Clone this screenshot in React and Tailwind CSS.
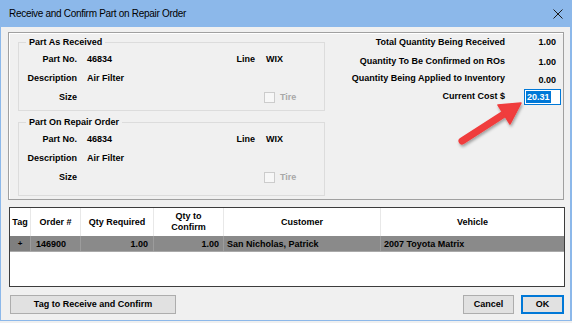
const font = { fontFamily: '"Liberation Sans", Arial, sans-serif' };

const asReceived = { partNo: "46834", line: "WIX", description: "Air Filter" };
const onOrder = { partNo: "46834", line: "WIX", description: "Air Filter" };

const totals = [
  { label: "Total Quantity Being Received", value: "1.00" },
  { label: "Quantity To Be Confirmed on ROs", value: "1.00" },
  { label: "Quantity Being Applied to Inventory", value: "0.00" },
];

const columns = [
  { title: "Tag", w: "w-[21px]" },
  { title: "Order #", w: "w-[50px]" },
  { title: "Qty Required", w: "w-[73px]" },
  { title: "Qty to\nConfirm", w: "w-[70px]" },
  { title: "Customer", w: "w-[157px]" },
  { title: "Vehicle", w: "flex-1" },
];

function PartGroup({ legend, part, height }) {
  return (
    <fieldset className={`border border-[#dcdcdc] w-[307px] ${height}`}>
      <legend className="ml-[7px] px-[3px] h-[12px] leading-[12px] text-[9px] font-bold">{legend}</legend>
      <div className="pt-[2px] text-[9px] font-bold leading-[19px]">
        <div className="flex h-[19px]">
          <span className="w-[58px] text-right">Part No.</span>
          <span className="w-[130px] pl-[10px]">{part.partNo}</span>
          <span className="w-[48px] text-right">Line</span>
          <span className="pl-[11px]">{part.line}</span>
        </div>
        <div className="flex h-[19px]">
          <span className="w-[58px] text-right">Description</span>
          <span className="w-[130px] pl-[10px]">{part.description}</span>
        </div>
        <div className="flex h-[19px] items-center">
          <span className="w-[58px] text-right">Size</span>
          <span className="w-[187px]" />
          <span className="w-[11px] h-[11px] border border-[#cccccc] bg-[#f7f7f7]" />
          <span className="pl-[5px] text-[#a8a8a8]">Tire</span>
        </div>
      </div>
    </fieldset>
  );
}

export default function App() {
  return (
    <div style={font} className="w-[572px] h-[323px] bg-[#f0f0f0] text-black">
      <div className="relative w-[572px] h-[321px] flex flex-col border-l border-r-2 border-b border-[#8cb8ea]">
        <div className="h-[27px] bg-[#8cb8ea] flex items-center justify-between pl-[9px] pr-[7px] -mx-px">
          <span className="text-[10px] tracking-[-0.3px]">Receive and Confirm Part on Repair Order</span>
          <svg width="10" height="10" viewBox="0 0 10 10" className="mr-[1px]">
            <path d="M0.5 0.5 L9.5 9.5 M9.5 0.5 L0.5 9.5" stroke="#1a1a1a" strokeWidth="1" />
          </svg>
        </div>

        <div className="flex-1 flex flex-col pl-[7px] pr-[6px] pt-[5px]">
          <div className="h-[168px] flex border border-[#a0a0a0] shadow-[inset_1px_1px_0_#ffffff]">
            <div className="flex flex-col gap-[5px] pl-[9px] pt-[3px]">
              <PartGroup legend="Part As Received" part={asReceived} height="h-[75px]" />
              <PartGroup legend="Part On Repair Order" part={onOrder} height="h-[80px]" />
            </div>
            <div className="flex-1 flex flex-col pt-[1px] text-[9px] font-bold">
              {totals.map((t, i) => (
                <div key={t.label} className={`flex h-[18px] items-center ${i === 1 ? "mt-[1px]" : ""} ${i === 2 ? "-mt-[1px]" : ""}`}>
                  <span className="flex-1 text-right">{t.label}</span>
                  <span className={`w-[58px] text-right pr-[7px] ${i > 0 ? "pt-[2px]" : ""} ${i === 2 ? "pt-[4px]" : ""}`}>{t.value}</span>
                </div>
              ))}
              <div className="flex h-[18px] items-center">
                <span className="flex-1 text-right">Current Cost $</span>
                <span className="w-[58px] pl-[19px]">
                  <span className="flex items-center w-[37px] h-[16px] border border-[#0078d7] bg-white pl-px">
                    <span className="bg-[#0078d7] text-white leading-[12px] px-px">20.31</span>
                  </span>
                </span>
              </div>
            </div>
          </div>

          <div className="mt-[7px] h-[80px] bg-white border border-[#3c3c3c] ml-px -mr-px flex flex-col text-[9px] font-bold">
            <div className="flex h-[28px]">
              {columns.map((c) => (
                <div key={c.title} className={`${c.w} flex items-center justify-center text-center whitespace-pre-line leading-[11px] border-r border-[#e8e8e8] last:border-r-0`}>
                  {c.title}
                </div>
              ))}
            </div>
            <div className="flex h-[16px] bg-[#8a8a8a] leading-[16px] border-b border-[#a9a9a9]">
              <div className="w-[21px] text-center bg-[#7f7f7f] border-r border-[#9c9c9c] text-[8px]">+</div>
              <div className="w-[50px] pl-[5px] border-r border-[#9c9c9c]">146900</div>
              <div className="w-[73px] text-right pr-[5px] border-r border-[#9c9c9c]">1.00</div>
              <div className="w-[70px] text-right pr-[4px] border-r border-[#9c9c9c]">1.00</div>
              <div className="w-[157px] pl-[3px] border-r border-[#9c9c9c]">San Nicholas, Patrick</div>
              <div className="flex-1 pl-[3px]">2007 Toyota Matrix</div>
            </div>
          </div>

          <div className="mt-[8px] flex items-center text-[9px] font-bold">
            <button className="ml-[2px] w-[166px] h-[19px] bg-[#e1e1e1] border border-[#adadad]">Tag to Receive and Confirm</button>
            <div className="flex-1" />
            <button className="w-[51px] h-[19px] bg-[#e1e1e1] border border-[#adadad]">Cancel</button>
            <button className="ml-[7px] w-[43px] h-[19px] bg-[#e1e1e1] border-2 border-[#0078d7]">OK</button>
          </div>
        </div>

        <svg className="absolute left-[450px] top-[96px]" width="80" height="56" viewBox="450 96 80 56">
          <defs>
            <filter id="sh" x="-20%" y="-20%" width="140%" height="140%">
              <feDropShadow dx="1" dy="2" stdDeviation="1.5" floodColor="#000" floodOpacity="0.35" />
            </filter>
          </defs>
          <g filter="url(#sh)" fill="#f03c3c" stroke="#f03c3c">
            <line x1="461" y1="141" x2="503" y2="114" strokeWidth="7" strokeLinecap="round" />
            <polygon points="520,103 509,124 497,105" strokeWidth="1.5" strokeLinejoin="round" />
          </g>
        </svg>
      </div>
    </div>
  );
}
